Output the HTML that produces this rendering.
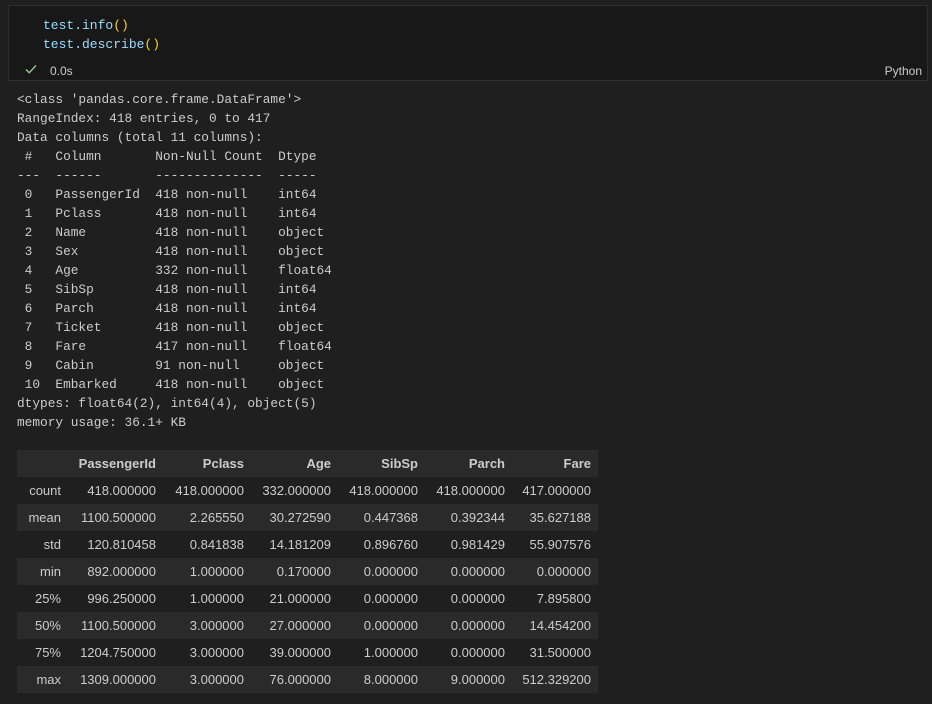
<!DOCTYPE html>
<html><head><meta charset="utf-8"><style>
body{margin:0;width:932px;height:704px;background:#1f1f1f;overflow:hidden;position:relative;font-family:"Liberation Sans",sans-serif;color:#cccccc}
.cell{position:absolute;left:8px;top:5px;width:918px;height:74px;background:#181818;border:1px solid #2f2f2f}
.code{position:absolute;font:13px/19px "Liberation Mono",monospace;color:#9cdcfe;white-space:pre}
.code .p{color:#ffd700}
.py{position:absolute;font-size:12px;color:#cccccc}
.out{position:absolute;left:17px;top:90px;font:12.8px/19px "Liberation Mono",monospace;color:#cccccc;white-space:pre;margin:0}
table{position:absolute;left:17px;top:450px;border-collapse:collapse;font-size:13px;color:#cccccc;table-layout:fixed;width:581px}
td,th{height:27px;padding:0 7px;text-align:right;white-space:nowrap;overflow:hidden}
th{font-weight:bold}
tr.l{background:#2a2a2a}
tr.d{background:#1f1f1f}
</style></head><body>
<div class="cell">
<div class="code" style="left:34px;top:10px">test.info<span class="p">()</span>
test.describe<span class="p">()</span></div>
<svg style="position:absolute;left:15px;top:56px" width="14" height="14" viewBox="0 0 14 14"><path d="M2 7.5l3.2 3.2L12 3.5" stroke="#89d185" stroke-width="1.4" fill="none"/></svg>
<div style="position:absolute;left:41px;top:58px;font-size:12px">0.0s</div>
<div class="py" style="right:5px;top:58px">Python</div>
</div>
<pre class="out">&lt;class 'pandas.core.frame.DataFrame'&gt;
RangeIndex: 418 entries, 0 to 417
Data columns (total 11 columns):
 #   Column       Non-Null Count  Dtype  
---  ------       --------------  -----  
 0   PassengerId  418 non-null    int64  
 1   Pclass       418 non-null    int64  
 2   Name         418 non-null    object 
 3   Sex          418 non-null    object 
 4   Age          332 non-null    float64
 5   SibSp        418 non-null    int64  
 6   Parch        418 non-null    int64  
 7   Ticket       418 non-null    object 
 8   Fare         417 non-null    float64
 9   Cabin        91 non-null     object 
 10  Embarked     418 non-null    object 
dtypes: float64(2), int64(4), object(5)
memory usage: 36.1+ KB</pre>
<table>
<colgroup><col style="width:51px"><col style="width:95px"><col style="width:88px"><col style="width:87px"><col style="width:87px"><col style="width:87px"><col style="width:86px"></colgroup>
<tr class="l"><th></th><th>PassengerId</th><th>Pclass</th><th>Age</th><th>SibSp</th><th>Parch</th><th>Fare</th></tr>
<tr class="d"><td>count</td><td>418.000000</td><td>418.000000</td><td>332.000000</td><td>418.000000</td><td>418.000000</td><td>417.000000</td></tr>
<tr class="l"><td>mean</td><td>1100.500000</td><td>2.265550</td><td>30.272590</td><td>0.447368</td><td>0.392344</td><td>35.627188</td></tr>
<tr class="d"><td>std</td><td>120.810458</td><td>0.841838</td><td>14.181209</td><td>0.896760</td><td>0.981429</td><td>55.907576</td></tr>
<tr class="l"><td>min</td><td>892.000000</td><td>1.000000</td><td>0.170000</td><td>0.000000</td><td>0.000000</td><td>0.000000</td></tr>
<tr class="d"><td>25%</td><td>996.250000</td><td>1.000000</td><td>21.000000</td><td>0.000000</td><td>0.000000</td><td>7.895800</td></tr>
<tr class="l"><td>50%</td><td>1100.500000</td><td>3.000000</td><td>27.000000</td><td>0.000000</td><td>0.000000</td><td>14.454200</td></tr>
<tr class="d"><td>75%</td><td>1204.750000</td><td>3.000000</td><td>39.000000</td><td>1.000000</td><td>0.000000</td><td>31.500000</td></tr>
<tr class="l"><td>max</td><td>1309.000000</td><td>3.000000</td><td>76.000000</td><td>8.000000</td><td>9.000000</td><td>512.329200</td></tr>
</table>
</body></html>
